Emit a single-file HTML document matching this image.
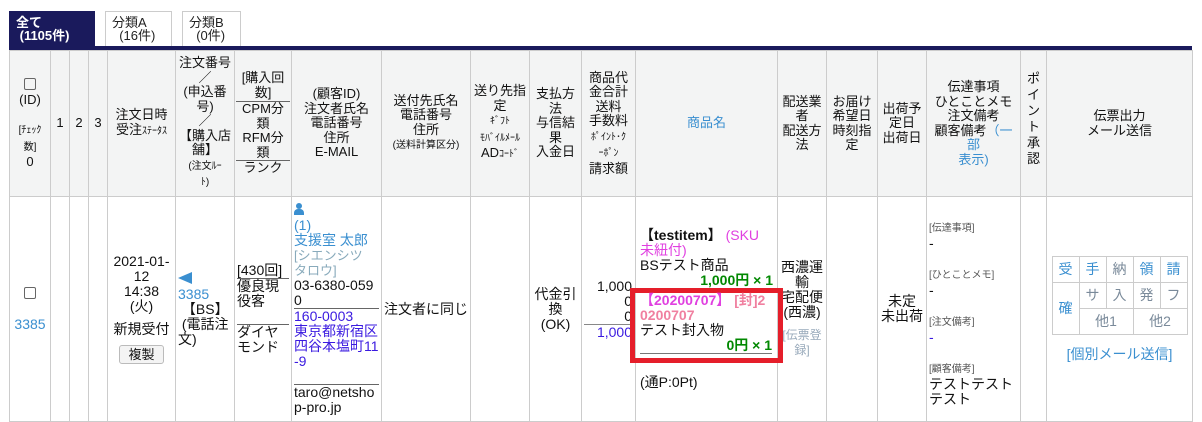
<!DOCTYPE html>
<html><head><meta charset="utf-8">
<style>
*{box-sizing:border-box}
body{margin:0;width:1202px;height:421px;background:#fff;font-family:"Liberation Sans","Noto Sans CJK JP",sans-serif;font-size:14px;line-height:15px;color:#111;overflow:hidden;position:relative}
.tab{position:absolute;top:11px;height:36px;border:1px solid #ccc;font-size:13px;line-height:13px;padding:4px 0 0 6px;color:#222}
.tab.on{background:#1a1a5c;color:#fff;font-weight:bold;border-color:#1a1a5c}
.bar{position:absolute;left:9px;top:46px;width:1183px;height:4px;background:#1a1a5c}
table.main{position:absolute;left:9px;top:50px;border-collapse:collapse;table-layout:fixed;width:1183px}
table.main>tbody>tr>td{border:1px solid #ccc;text-align:center;vertical-align:middle;padding:0 2px;word-break:break-all}
tr.h>td{background:#f3f4f4;height:146px;font-size:13px;line-height:14.5px}
table.main>tbody>tr.h>td{padding:0 1px}
tr.b>td{height:225px}
.s{font-size:10px}
.blue{color:#3a8fd0}
.ln{border-bottom:1px solid #666}
.mini{border-collapse:collapse;margin:0 auto}
.mini td{border:1px solid #ccc;height:26px;width:27px;color:#3a8fd0;padding:0;font-size:14px;text-align:center;vertical-align:middle}
.mini td.g{color:#7a8a9a}
.btn{display:inline-block;border:1px solid #bbb;border-radius:3px;background:#f4f4f4;padding:1px 8px;font-size:13px;margin-top:8px}
</style></head><body>
<div class="tab on" style="left:9px;width:86px">全て<br>&nbsp;(1105件)</div>
<div class="tab" style="left:105px;width:67px">分類A<br>&nbsp;&nbsp;(16件)</div>
<div class="tab" style="left:182px;width:59px">分類B<br>&nbsp;&nbsp;(0件)</div>
<div class="bar"></div>
<table class="main">
<colgroup><col style="width:41px"><col style="width:19px"><col style="width:19px"><col style="width:19px"><col style="width:68px"><col style="width:59px"><col style="width:57px"><col style="width:90px"><col style="width:89px"><col style="width:59px"><col style="width:52px"><col style="width:54px"><col style="width:142px"><col style="width:49px"><col style="width:51px"><col style="width:49px"><col style="width:94px"><col style="width:26px"><col style="width:146px"></colgroup>
<tr class="h">
<td><span style="display:inline-block;width:12px;height:12px;border:1px solid #666;border-radius:2px"></span><br>(ID)<br><br><span class="s">[ﾁｪｯｸ<br>数]</span><br>0</td>
<td>1</td><td>2</td><td>3</td>
<td>注文日時<br>受注<span class="s">ｽﾃｰﾀｽ</span></td>
<td>注文番号<br>／<br>(申込番<br>号)<br>／<br>【購入店<br>舗】<br><span class="s">(注文ﾙｰ<br>ﾄ)</span></td>
<td><div class="ln" style="padding:0 0 1px">[購入回<br>数]</div><div class="ln">CPM分<br>類<br>RFM分<br>類</div>ランク</td>
<td>(顧客ID)<br>注文者氏名<br>電話番号<br>住所<br>E-MAIL</td>
<td>送付先氏名<br>電話番号<br>住所<br><span class="s">(送料計算区分)</span></td>
<td>送り先指<br>定<br><span class="s">ｷﾞﾌﾄ<br>ﾓﾊﾞｲﾙﾒｰﾙ</span><br>AD<span class="s">ｺｰﾄﾞ</span></td>
<td>支払方<br>法<br>与信結<br>果<br>入金日</td>
<td>商品代<br>金合計<br>送料<br>手数料<br><span class="s">ﾎﾟｲﾝﾄ･ｸ<br>ｰﾎﾟﾝ</span><br>請求額</td>
<td class="blue">商品名</td>
<td>配送業<br>者<br>配送方<br>法</td>
<td>お届け<br>希望日<br>時刻指<br>定</td>
<td>出荷予<br>定日<br>出荷日</td>
<td>伝達事項<br>ひとことメモ<br>注文備考<br>顧客備考<span class="blue">（一部<br>表示)</span></td>
<td style="vertical-align:top;padding-top:20px;line-height:16px">ポ<br>イ<br>ン<br>ト<br>承<br>認</td>
<td>伝票出力<br>メール送信</td>
</tr>
<tr class="b">
<td><span style="display:inline-block;width:12px;height:12px;border:1px solid #666;border-radius:2px"></span><br><br><span class="blue">3385</span></td>
<td></td><td></td><td></td>
<td>2021-01-<br>12<br>14:38<br>(火)<br><div style="margin-top:8px">新規受付</div><span class="btn">複製</span></td>
<td style="text-align:left"><span style="display:inline-block;width:0;height:0;border-top:6px solid transparent;border-bottom:6px solid transparent;border-right:14px solid #3a8fd0"></span><br><span class="blue">3385</span><br>&nbsp;【BS】<br>&nbsp;(電話注<br>文)</td>
<td style="text-align:left"><div class="ln">[430回]</div><div class="ln">優良現<br>役客<br>&nbsp;</div>ダイヤ<br>モンド</td>
<td style="text-align:left;vertical-align:top;padding-top:6px"><span style="display:inline-block;width:10px;height:12px;position:relative"><span style="position:absolute;left:2px;top:0;width:6px;height:6px;border-radius:50%;background:#3a8fd0"></span><span style="position:absolute;left:0;top:6px;width:10px;height:6px;border-radius:4px 4px 0 0;background:#3a8fd0"></span></span><br><span class="blue">(1)<br>支援室 太郎</span><br><span style="color:#8ab;font-size:13px">[シエンシツ タロウ]</span><div class="ln">03-6380-0590</div><div class="ln" style="color:#3a1ae0">160-0003<br>東京都新宿区四谷本塩町11-9<br>&nbsp;</div>taro@netshop-pro.jp</td>
<td style="text-align:left">注文者に同じ</td>
<td></td>
<td>代金引<br>換<br>(OK)</td>
<td style="text-align:right;padding-right:3px">1,000<br>0<br><div class="ln" style="border-color:#888">0</div><span style="color:#3a1ae0">1,000</span></td>
<td style="text-align:left;padding:0 4px">
<b>【testitem】</b> <span style="color:#e040e0">(SKU未紐付)</span><br>BSテスト商品<br><div style="text-align:right;color:#080;font-weight:bold">1,000円 × 1</div>
<div style="position:relative;margin:0 -10px;border:5px solid #e51e2a;padding:0 6px 4px 5px">
<b style="color:#e040e0">【20200707】</b> <b style="color:#f080a0">[封]20200707</b><br>テスト封入物<div class="ln" style="text-align:right;color:#080;font-weight:bold;border-color:#777">0円 × 1</div></div>
<div style="margin-top:12px">(通P:0Pt)</div></td>
<td>西濃運<br>輸<br>宅配便<br>(西濃)<br><div style="margin-top:8px;color:#9ab;font-size:12px">[伝票登<br>録]</div></td>
<td></td>
<td>未定<br>未出荷</td>
<td style="text-align:left;vertical-align:top;padding-top:22px"><span class="s" style="color:#555">[伝達事項]</span><br>-<br><br><span class="s" style="color:#555">[ひとことメモ]</span><br>-<br><br><span class="s" style="color:#555">[注文備考]</span><br><span style="color:#3a1ae0">-</span><br><br><span class="s" style="color:#555">[顧客備考]</span><br>テストテストテスト</td>
<td></td>
<td><table class="mini"><tr><td>受</td><td>手</td><td class="g">納</td><td>領</td><td>請</td></tr><tr><td rowspan="2">確</td><td class="g">サ</td><td class="g">入</td><td class="g">発</td><td class="g">フ</td></tr><tr><td colspan="2" class="g">他1</td><td colspan="2" class="g">他2</td></tr></table><div class="blue" style="margin-top:12px">[個別メール送信]</div></td>
</tr>
</table>
</body></html>
